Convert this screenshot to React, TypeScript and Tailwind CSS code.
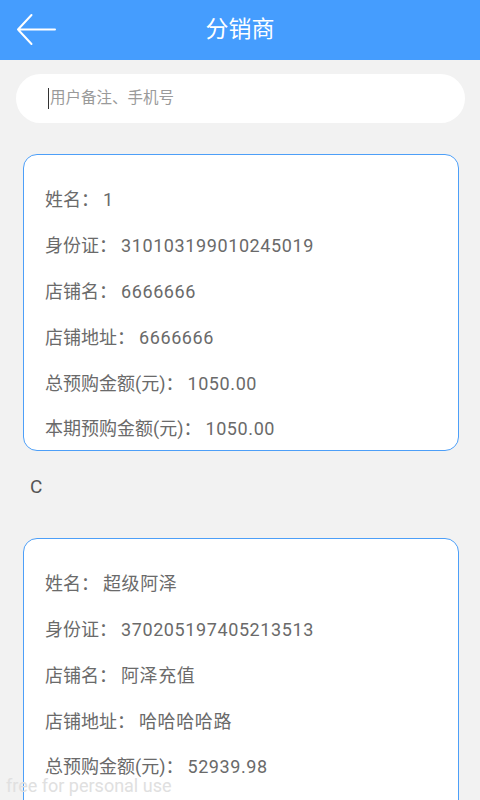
import React from "react";

const font = { fontFamily: 'Roboto, "Noto Sans CJK SC", sans-serif' };

function Row({ label, value }: { label: string; value: string }) {
  return (
    <div className="flex h-[45.8px] items-center pt-[4px] text-[18px] text-[#6a6a6a]">
      <span>{label}：</span>
      <span className="ml-[4px] tracking-[0.6px]">{value}</span>
    </div>
  );
}

function Card({ rows }: { rows: [string, string][] }) {
  return (
    <div className="ml-[23px] mr-[21px] rounded-[14px] border-[1.5px] border-[#4d9ff8] bg-white pl-[21px] pt-[20px]">
      {rows.map(([l, v], i) => (
        <Row key={i} label={l} value={v} />
      ))}
    </div>
  );
}

export default function App() {
  return (
    <div className="relative h-[800px] w-[480px] overflow-hidden bg-[#f2f2f2]" style={font}>
      <div className="relative flex h-[60px] items-center justify-center bg-[#459dfe]">
        <svg className="absolute left-[16px] top-[13px]" width="42" height="34" viewBox="0 0 42 34">
          <path d="M39 16.5H2M15.5 2L2 16.5L15.5 31" fill="none" stroke="white" strokeWidth="2" strokeLinecap="round" strokeLinejoin="round" />
        </svg>
        <span className="text-[23px] text-white">分销商</span>
      </div>
      <div className="pl-[16px] pr-[15px] pt-[14px]">
        <div className="flex h-[49px] items-center rounded-full bg-white pl-[32px] text-[15.5px] text-[#9a9a9a]">
          <span className="mr-[1px] h-[21px] w-[1px] bg-[#333]" />
          <span>用户备注、手机号</span>
        </div>
      </div>
      <div className="pt-[31px]">
        <Card
          rows={[
            ["姓名", "1"],
            ["身份证", "310103199010245019"],
            ["店铺名", "6666666"],
            ["店铺地址", "6666666"],
            ["总预购金额(元)", "1050.00"],
            ["本期预购金额(元)", "1050.00"],
          ]}
        />
      </div>
      <div className="h-[87px] pl-[30px] pt-[22px] text-[19px] leading-[28px] text-[#555]">C</div>
      <Card
        rows={[
          ["姓名", "超级阿泽"],
          ["身份证", "370205197405213513"],
          ["店铺名", "阿泽充值"],
          ["店铺地址", "哈哈哈哈路"],
          ["总预购金额(元)", "52939.98"],
          ["本期预购金额(元)", "52939.98"],
        ]}
      />
      <div className="absolute bottom-[4px] left-[6px] text-[18px] leading-[20px] text-[#e0e0e0]">free for personal use</div>
    </div>
  );
}
